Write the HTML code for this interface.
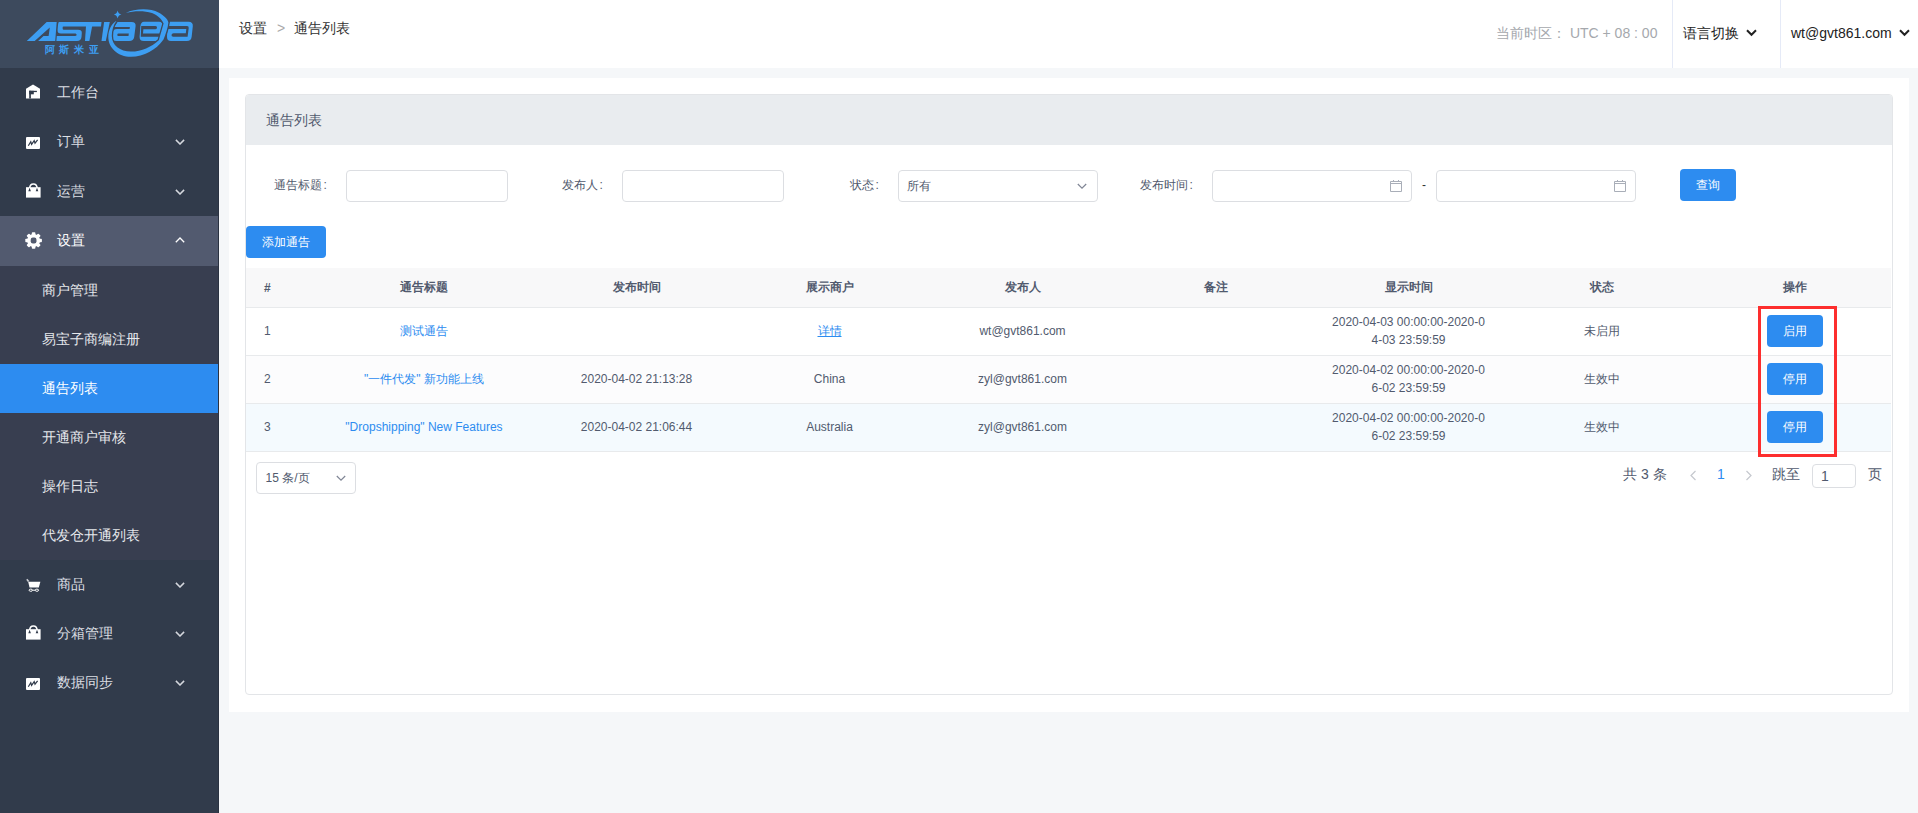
<!DOCTYPE html>
<html><head><meta charset="utf-8">
<style>
*{box-sizing:border-box;margin:0;padding:0}
html,body{width:1918px;height:813px;overflow:hidden;background:#f5f7f9;font-family:"Liberation Sans",sans-serif;color:#515a6e;font-size:12px}
.abs{position:absolute}
#side{position:absolute;left:0;top:0;width:219px;height:813px;background:#313b4b}
#logo{position:absolute;left:0;top:0;width:219px;height:68px;background:#3d4a5d}
.mi{position:absolute;left:0;width:218px;color:#dcdfe4;font-size:14px;line-height:20px}
.mi .t{position:absolute;left:57px;top:0}
.mi .ic{position:absolute;left:26px}
.chev{position:absolute;left:175px;width:10px;height:6px}
.sub{position:absolute;left:0;width:218px;height:49px;color:#e6e8ec;font-size:14px}
.sub span{position:absolute;left:42px;top:14px;line-height:20px}
#sideline{position:absolute;left:218px;top:68px;width:1px;height:745px;background:#2a3241}
#header{position:absolute;left:219px;top:0;width:1699px;height:68px;background:#fff}
#card{position:absolute;left:229px;top:78px;width:1680px;height:634px;background:#fff}
#panel{position:absolute;left:245px;top:94px;width:1648px;height:601px;border:1px solid #e3e5e8;border-radius:4px;background:#fff;overflow:hidden}
#phead{position:absolute;left:0;top:0;width:100%;height:50px;background:#e9ecef}
.lbl i{font-style:normal;margin-left:1.5px}
.lbl{position:absolute;font-size:12px;color:#515a6e;line-height:16px}
.inp{position:absolute;height:32px;border:1px solid #dcdee2;border-radius:4px;background:#fff}
.btn{position:absolute;height:32px;background:#2d8cf0;border-radius:4px;color:#fff;font-size:12px;text-align:center;line-height:32px}
table{border-collapse:collapse;table-layout:fixed;position:absolute;left:0;top:173px;width:1645px}
th{height:39px;background:#f8f8f9;font-weight:bold;font-size:12px;color:#515a6e;border-bottom:1px solid #e8eaec;text-align:center;padding:1px 18px 0}
td{height:48px;font-size:12px;color:#515a6e;border-bottom:1px solid #e8eaec;text-align:center;padding:0 18px;line-height:18px;word-break:break-all}
th.l,td.l{text-align:left}
a{color:#2d8cf0;text-decoration:none}
</style></head><body>

<div id="side">
  <div id="logo">
    <svg width="219" height="68" viewBox="0 0 219 68" style="position:absolute;left:0;top:0">
      <g fill="#3d9ef2">
        <path d="M26.8 41 L46.7 22 L56.7 22 L55.2 41 L38.1 41 L43.5 36 L48.6 36 L49.8 27.5 L34.7 41 Z"/>
        <path d="M59 22 H101.5 L101 26.6 H63.5 Q62.6 26.6 62.6 28 Q62.6 29.8 63.5 29.8 H78 Q82 29.8 81.8 33 L81.5 37 Q81 41 77 41 H56.4 L56.8 36 H75 Q76.5 36 76.6 35 Q76.7 33.5 75.5 33.5 H61 Q57.3 33.5 57.6 30 L57.9 26 Q58.3 22 59 22 Z"/>
        <path d="M86 26 H92.2 L89.4 41 H85 Z"/>
        <path d="M117.6 10.6 Q118.3 13.9 121.4 14.6 Q118.3 15.3 117.6 18.6 Q116.9 15.3 113.8 14.6 Q116.9 13.9 117.6 10.6 Z"/>
        <path d="M117.5 22 H131.5 Q136 22 135.6 26 L134.2 37 Q133.6 41 129.2 41 H116.5 Q111.8 41 112.2 36.5 L112.5 33 Q112.9 29.1 117 29.1 H129.6 L129.9 26.9 H114 Z"/>
        <path d="M144 21.7 H159 Q163 21.7 163 26 L161 41 H143.8 Q139.3 41 139.6 36.5 L140.4 26.2 Q140.8 21.7 144 21.7 Z"/>
        <path d="M170 21.7 H188.5 Q193.2 21.7 192.8 26.2 L191.7 36.5 Q191.3 41 186.8 41 H171 Q166.8 41 167 36.5 L167.5 26.2 Z"/>
      </g>
      <g fill="#3d4a5d">
        <path d="M118.5 33.4 H128.8 L128.5 36 H118.2 Q117.2 36 117.3 34.7 Q117.4 33.4 118.5 33.4 Z"/>
        <path d="M141.2 26 H155.5 Q157.2 26 157 27.7 Q156.8 29.3 155.2 29.3 H143.4 L143 33.4 H163 L162.7 36.7 H140.8 Z"/>
        <path d="M166 26 H187 Q189 26 188.7 28 L187.6 36.7 H173.3 Q171.3 36.7 171.5 35 Q171.7 33.3 173.6 33.3 H185.8 L186.3 28.9 H166 Z"/>
      </g>
      <path fill="#3d9ef2" stroke="#3d4a5d" stroke-width="2.6" paint-order="stroke" d="M126 12.9 C134 8.6 150 7.6 158.5 12.5 C163.5 15.3 167.8 19 168.4 22.5 C167.8 28 165.8 34 163.5 39.5 C156 50 144 56.8 131 56.8 C118 56.8 108.3 48 108.3 37 C108.3 29.5 111.5 24 116.5 20.8 C113.5 25 111.8 30 111.8 36 C111.8 45 120 51.6 131 51.6 C142 51.6 151 47 158.8 40.2 C160.6 34 162.2 28.5 163.6 23.5 C161.5 19 158 15.5 152 13 C144 10.5 134 10.8 126 12.9 Z"/>
      <path fill="#3d9ef2" d="M104.1 22 H109.8 L105.8 41 H101.5 Z"/>
      <text x="44.8" y="53.2" font-size="9.6" fill="#3d9ef2" letter-spacing="4.6" font-weight="bold">阿斯米亚</text>
    </svg>
  </div>

  <!-- top items -->
  <div class="mi" style="top:82px;height:20px">
    <svg class="ic" style="top:2px" width="14" height="15" viewBox="0 0 14 15"><path d="M0 4.7 L7 0.5 L14 4.7 V14.5 H0 Z" fill="#fff"/><g fill="#313b4b"><rect x="3.2" y="6.8" width="1.7" height="7.7"/><rect x="3.2" y="6.8" width="7.7" height="1.3"/><rect x="3.2" y="6.8" width="4.6" height="3.5"/></g></svg>
    <span class="t">工作台</span>
  </div>
  <div class="mi" style="top:131px;height:20px">
    <svg class="ic" style="top:6px" width="14" height="12" viewBox="0 0 14 12"><rect x="0" y="0" width="14" height="12" rx="1" fill="#fff"/><path d="M2.3 8.8 L4.8 4.8 L5.6 7.4 L8.2 3.6 L9 6.2 L11.6 2.8" stroke="#313b4b" stroke-width="1.2" fill="none"/></svg>
    <span class="t">订单</span>
    <svg class="chev" style="top:8px" viewBox="0 0 10 6"><path d="M0.9 0.9 L5 5 L9.1 0.9" stroke="#d5d8de" stroke-width="1.5" fill="none"/></svg>
  </div>
  <div class="mi" style="top:181px;height:20px">
    <svg class="ic" style="top:2px" width="15" height="15" viewBox="0 0 15 15"><rect x="0" y="4.2" width="14.6" height="10.4" fill="#fff"/><path d="M3.6 5.5 Q3.8 1 7.4 1 Q11 1 11.2 5.5" stroke="#fff" stroke-width="1.5" fill="none"/><path d="M3.6 5.5 Q3.7 3.5 4 3" stroke="#313b4b" stroke-width="0" fill="none"/><path d="M2.3 8.3 L3.6 4.8 L4.9 8.3 Z M9.7 8.3 L11 4.8 L12.3 8.3 Z" fill="#313b4b"/></svg>
    <span class="t">运营</span>
    <svg class="chev" style="top:8px" viewBox="0 0 10 6"><path d="M0.9 0.9 L5 5 L9.1 0.9" stroke="#d5d8de" stroke-width="1.5" fill="none"/></svg>
  </div>
  <!-- settings open -->
  <div class="abs" style="left:0;top:216px;width:218px;height:50px;background:#525a6f"></div>
  <div class="mi" style="top:230px;height:20px;color:#fff">
    <svg class="ic" style="left:24.5px;top:2px" width="17" height="17" viewBox="0 0 17 17"><g fill="#fff"><circle cx="8.6" cy="8.5" r="6.5"/><rect x="6.8" y="0.2" width="3.6" height="16.6" rx="0.8" transform="rotate(0 8.6 8.5)"/><rect x="6.8" y="0.2" width="3.6" height="16.6" rx="0.8" transform="rotate(45 8.6 8.5)"/><rect x="6.8" y="0.2" width="3.6" height="16.6" rx="0.8" transform="rotate(90 8.6 8.5)"/><rect x="6.8" y="0.2" width="3.6" height="16.6" rx="0.8" transform="rotate(135 8.6 8.5)"/></g><rect x="5.7" y="5.6" width="5.8" height="5.8" rx="2.2" fill="#525a6f"/></svg>
    <span class="t">设置</span>
    <svg class="chev" style="top:7px" viewBox="0 0 10 6"><path d="M0.8 5.2 L5 1 L9.2 5.2" stroke="#fff" stroke-width="1.3" fill="none"/></svg>
  </div>
  <div class="abs" style="left:0;top:266px;width:218px;height:294px;background:#383e50"></div>
  <div class="sub" style="top:266px"><span>商户管理</span></div>
  <div class="sub" style="top:315px"><span>易宝子商编注册</span></div>
  <div class="sub" style="top:364px;background:#2d8cf0;color:#fff"><span>通告列表</span></div>
  <div class="sub" style="top:413px"><span>开通商户审核</span></div>
  <div class="sub" style="top:462px"><span>操作日志</span></div>
  <div class="sub" style="top:511px"><span>代发仓开通列表</span></div>

  <div class="mi" style="top:574px;height:20px">
    <svg class="ic" style="top:4px" width="16" height="15" viewBox="0 0 16 15"><path d="M0.8 1.2 L2.6 3.6" stroke="#c9ccd2" stroke-width="1.6"/><path d="M2.2 3.8 H14.4 L12.8 9.6 H3.5 Z" fill="#fff"/><ellipse cx="4.8" cy="12.2" rx="1.7" ry="1.1" stroke="#fff" stroke-width="1" fill="none"/><ellipse cx="10.9" cy="12.2" rx="1.7" ry="1.1" stroke="#fff" stroke-width="1" fill="none"/><path d="M6.5 12.2 H9.2" stroke="#fff" stroke-width="1"/></svg>
    <span class="t">商品</span>
    <svg class="chev" style="top:8px" viewBox="0 0 10 6"><path d="M0.9 0.9 L5 5 L9.1 0.9" stroke="#d5d8de" stroke-width="1.5" fill="none"/></svg>
  </div>
  <div class="mi" style="top:623px;height:20px">
    <svg class="ic" style="top:2px" width="15" height="15" viewBox="0 0 15 15"><rect x="0" y="4.2" width="14.6" height="10.4" fill="#fff"/><path d="M3.6 5.5 Q3.8 1 7.4 1 Q11 1 11.2 5.5" stroke="#fff" stroke-width="1.5" fill="none"/><path d="M3.6 5.5 Q3.7 3.5 4 3" stroke="#313b4b" stroke-width="0" fill="none"/><path d="M2.3 8.3 L3.6 4.8 L4.9 8.3 Z M9.7 8.3 L11 4.8 L12.3 8.3 Z" fill="#313b4b"/></svg>
    <span class="t">分箱管理</span>
    <svg class="chev" style="top:8px" viewBox="0 0 10 6"><path d="M0.9 0.9 L5 5 L9.1 0.9" stroke="#d5d8de" stroke-width="1.5" fill="none"/></svg>
  </div>
  <div class="mi" style="top:672px;height:20px">
    <svg class="ic" style="top:6px" width="14" height="12" viewBox="0 0 14 12"><rect x="0" y="0" width="14" height="12" rx="1" fill="#fff"/><path d="M2.3 8.8 L4.8 4.8 L5.6 7.4 L8.2 3.6 L9 6.2 L11.6 2.8" stroke="#313b4b" stroke-width="1.2" fill="none"/></svg>
    <span class="t">数据同步</span>
    <svg class="chev" style="top:8px" viewBox="0 0 10 6"><path d="M0.9 0.9 L5 5 L9.1 0.9" stroke="#d5d8de" stroke-width="1.5" fill="none"/></svg>
  </div>
</div>
<div id="sideline"></div>

<div id="header">
  <div class="abs" style="left:20px;top:18px;font-size:14px;line-height:20px;color:#333"><span>设置</span><span style="color:#aaa;margin:0 9px 0 10px">&gt;</span><span>通告列表</span></div>
  <div class="abs" style="left:1277px;top:23px;font-size:14px;line-height:20px;color:#a5a8ad;white-space:nowrap">当前时区：&nbsp;UTC + 08 : 00</div>
  <div class="abs" style="left:1453px;top:0;width:1px;height:68px;background:#e5eaf7"></div>
  <div class="abs" style="left:1464px;top:23px;font-size:14px;line-height:20px;color:#222;white-space:nowrap">语言切换</div>
  <svg class="abs" style="left:1527px;top:29px" width="11" height="8" viewBox="0 0 11 8"><path d="M1 1.2 L5.5 5.8 L10 1.2" stroke="#222" stroke-width="2" fill="none"/></svg>
  <div class="abs" style="left:1561px;top:0;width:1px;height:68px;background:#e5eaf7"></div>
  <div class="abs" style="left:1572px;top:23px;font-size:14px;line-height:20px;color:#222;white-space:nowrap">wt@gvt861.com</div>
  <svg class="abs" style="left:1680px;top:29px" width="11" height="8" viewBox="0 0 11 8"><path d="M1 1.2 L5.5 5.8 L10 1.2" stroke="#222" stroke-width="2" fill="none"/></svg>
</div>

<div id="card"></div>
<div id="panel">
  <div id="phead"><div class="abs" style="left:20px;top:14.5px;font-size:14px;line-height:20px;color:#515a6e">通告列表</div></div>

  <div class="lbl" style="left:28px;top:82px">通告标题<i>:</i></div>
  <div class="inp" style="left:100px;top:75px;width:162px"></div>
  <div class="lbl" style="left:316px;top:82px">发布人<i>:</i></div>
  <div class="inp" style="left:376px;top:75px;width:162px"></div>
  <div class="lbl" style="left:604px;top:82px">状态<i>:</i></div>
  <div class="inp" style="left:652px;top:75px;width:200px">
    <div class="abs" style="left:8px;top:7px;font-size:12px;line-height:16px;color:#515a6e">所有</div>
    <svg class="abs" style="left:178px;top:12px" width="10" height="7" viewBox="0 0 10 7"><path d="M0.8 1 L5 5.2 L9.2 1" stroke="#808695" stroke-width="1.2" fill="none"/></svg>
  </div>
  <div class="lbl" style="left:894px;top:82px">发布时间<i>:</i></div>
  <div class="inp" style="left:966px;top:75px;width:200px">
    <svg class="abs" style="left:177px;top:9px" width="12" height="12" viewBox="0 0 12 12"><path d="M0.5 1.5 H11.5 V11.5 H0.5 Z M0.5 3.5 H11.5 M3.5 0 V2 M8.5 0 V2" stroke="#a9aeb8" stroke-width="1" fill="none"/></svg>
  </div>
  <div class="abs" style="left:1176px;top:82px;font-size:12px;line-height:16px;color:#333">-</div>
  <div class="inp" style="left:1190px;top:75px;width:200px">
    <svg class="abs" style="left:177px;top:9px" width="12" height="12" viewBox="0 0 12 12"><path d="M0.5 1.5 H11.5 V11.5 H0.5 Z M0.5 3.5 H11.5 M3.5 0 V2 M8.5 0 V2" stroke="#a9aeb8" stroke-width="1" fill="none"/></svg>
  </div>
  <div class="btn" style="left:1434px;top:74px;width:56px">查询</div>

  <div class="btn" style="left:0px;top:131px;width:80px">添加通告</div>

  <table>
    <colgroup><col style="width:62px"><col style="width:232px"><col style="width:193px"><col style="width:193px"><col style="width:193px"><col style="width:193px"><col style="width:193px"><col style="width:193px"><col style="width:193px"></colgroup>
    <tr><th class="l">#</th><th>通告标题</th><th>发布时间</th><th>展示商户</th><th>发布人</th><th>备注</th><th>显示时间</th><th>状态</th><th>操作</th></tr>
    <tr style="background:#fff"><td class="l">1</td><td><a>测试通告</a></td><td></td><td><a style="text-decoration:underline">详情</a></td><td>wt@gvt861.com</td><td></td><td>2020-04-03 00:00:00-2020-04-03 23:59:59</td><td>未启用</td><td><div class="btn" style="position:relative;display:inline-block;width:56px">启用</div></td></tr>
    <tr style="background:#fcfcfd"><td class="l">2</td><td><a>"一件代发" 新功能上线</a></td><td>2020-04-02 21:13:28</td><td>China</td><td>zyl@gvt861.com</td><td></td><td>2020-04-02 00:00:00-2020-06-02 23:59:59</td><td>生效中</td><td><div class="btn" style="position:relative;display:inline-block;width:56px">停用</div></td></tr>
    <tr style="background:#f4fafe"><td class="l">3</td><td><a>"Dropshipping" New Features</a></td><td>2020-04-02 21:06:44</td><td>Australia</td><td>zyl@gvt861.com</td><td></td><td>2020-04-02 00:00:00-2020-06-02 23:59:59</td><td>生效中</td><td><div class="btn" style="position:relative;display:inline-block;width:56px">停用</div></td></tr>
  </table>

  <!-- pagination -->
  <div class="inp" style="left:10px;top:367px;width:100px">
    <div class="abs" style="left:8.5px;top:7px;font-size:12px;line-height:16px;color:#515a6e">15 条/页</div>
    <svg class="abs" style="left:78.5px;top:12px" width="10" height="7" viewBox="0 0 10 7"><path d="M0.8 1 L5 5.2 L9.2 1" stroke="#808695" stroke-width="1.2" fill="none"/></svg>
  </div>
  <div class="abs" style="left:1377px;top:368.5px;font-size:14px;line-height:20px;color:#515a6e;white-space:nowrap">共 3 条</div>
  <svg class="abs" style="left:1443px;top:375px" width="8" height="11" viewBox="0 0 8 11"><path d="M6.5 1 L2 5.5 L6.5 10" stroke="#c5c8ce" stroke-width="1.2" fill="none"/></svg>
  <div class="abs" style="left:1471px;top:368.5px;font-size:14px;line-height:20px;color:#2d8cf0">1</div>
  <svg class="abs" style="left:1499px;top:375px" width="8" height="11" viewBox="0 0 8 11"><path d="M1.5 1 L6 5.5 L1.5 10" stroke="#c5c8ce" stroke-width="1.2" fill="none"/></svg>
  <div class="abs" style="left:1526px;top:368.5px;font-size:14px;line-height:20px;color:#515a6e">跳至</div>
  <div class="inp" style="left:1566px;top:369px;width:44px;height:24px"><div class="abs" style="left:8px;top:2.5px;font-size:14px;line-height:16px;color:#515a6e">1</div></div>
  <div class="abs" style="left:1622px;top:368.5px;font-size:14px;line-height:20px;color:#515a6e">页</div>
</div>

<!-- red highlight box -->
<div class="abs" style="left:1758px;top:306px;width:79px;height:151px;border:3px solid #fd2e2e"></div>

</body></html>
